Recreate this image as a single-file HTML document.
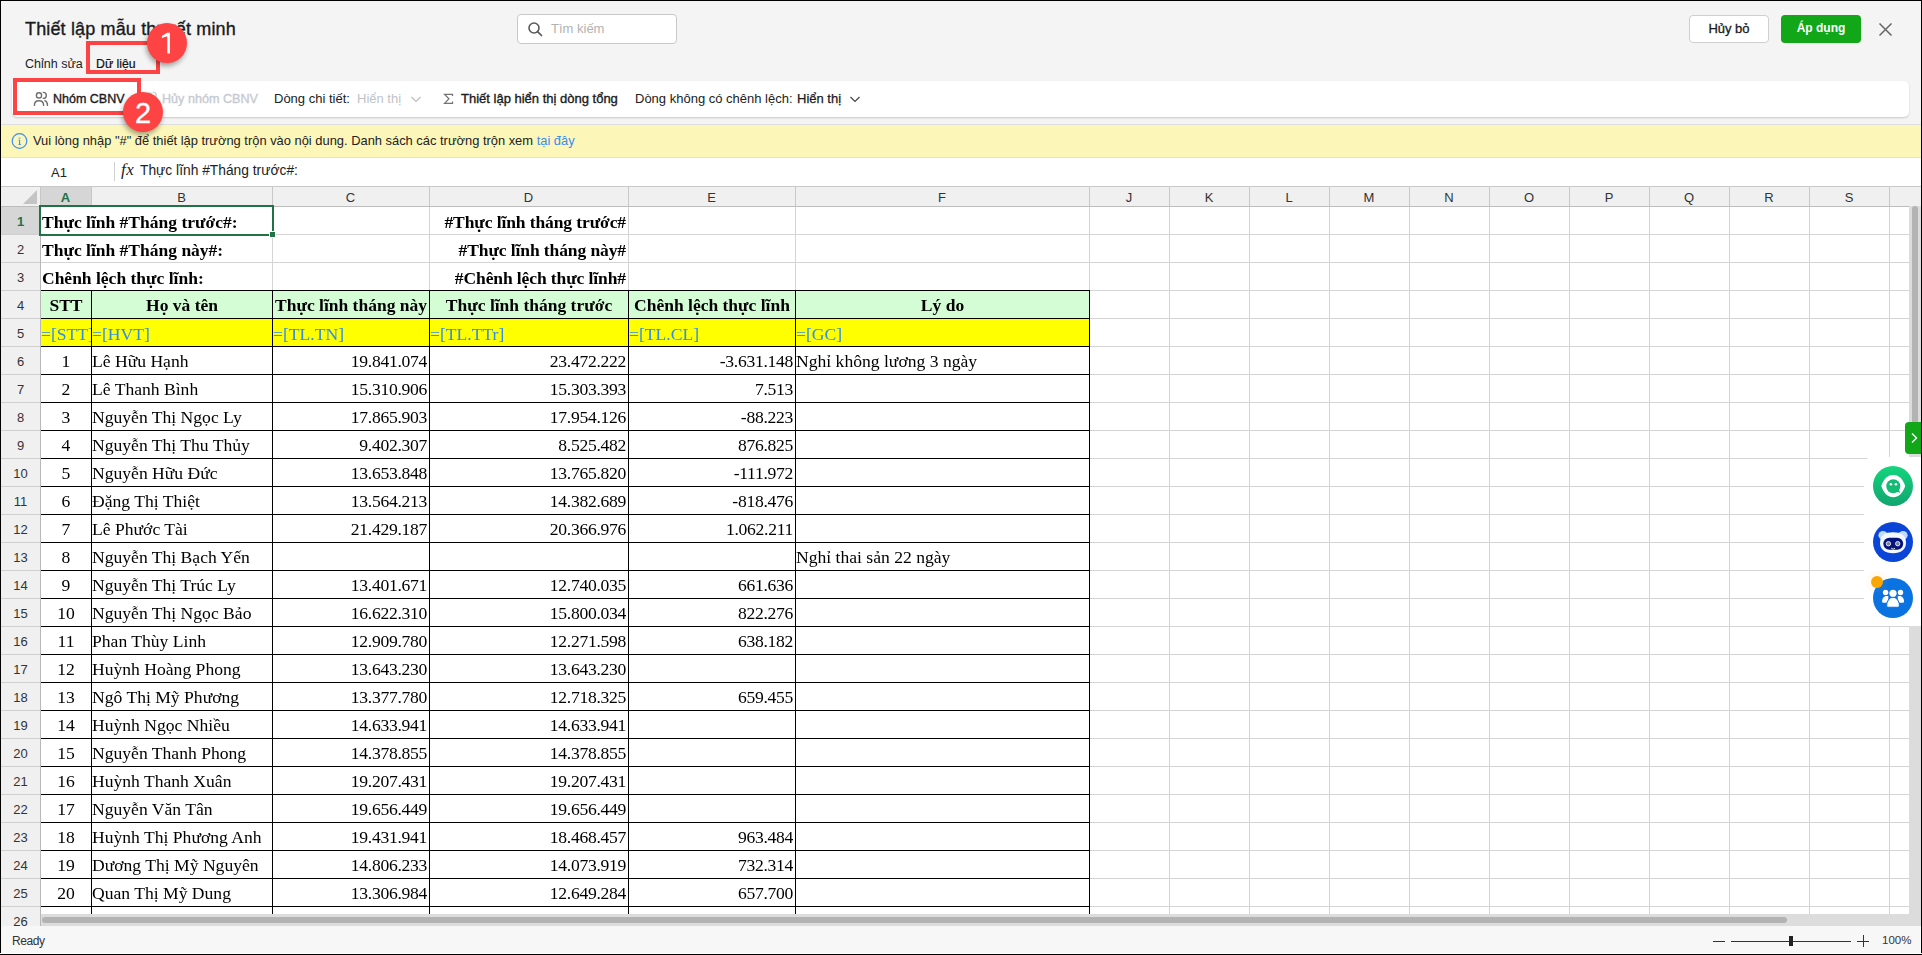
<!DOCTYPE html><html><head><meta charset="utf-8"><style>
*{margin:0;padding:0;box-sizing:border-box}
html,body{width:1922px;height:955px;overflow:hidden;background:#fff}
body{position:relative;font-family:"Liberation Sans",sans-serif;color:#222}
.a{position:absolute}
.t{position:absolute;white-space:nowrap;line-height:1}
.serif{font-family:"Liberation Serif",serif}
.gl{position:absolute;background:#d4d4d4}
.bk{position:absolute;background:#000}
.ch{position:absolute;top:187px;height:19px;font-size:13px;color:#333;text-align:center;line-height:22px}
.rh{position:absolute;left:1px;width:39px;height:28px;font-size:13px;color:#333;text-align:center;line-height:32px}
.c{will-change:transform;position:absolute;height:28px;font-family:"Liberation Serif",serif;font-size:17.6px;line-height:28px;white-space:nowrap;overflow:hidden;color:#000}
.b{font-weight:bold;font-size:17.5px}
.r{text-align:right;padding-right:2px;letter-spacing:-0.3px}
.ct{text-align:center}
.l{padding-left:0px}
.blue{color:#2f8cf0;line-height:30px;will-change:transform}
</style></head><body>
<div class="a" style="left:0;top:0;width:1922px;height:125px;background:#f4f4f4"></div>
<div class="t" style="left:25px;top:20px;font-size:18px;letter-spacing:0.15px;color:#1a1a1a;-webkit-text-stroke:0.35px #1a1a1a">Thiết lập mẫu thuyết minh</div>
<div class="a" style="left:517px;top:14px;width:160px;height:30px;background:#fff;border:1px solid #c9c9c9;border-radius:4px"></div>
<svg class="a" style="left:527px;top:21px" width="18" height="18" viewBox="0 0 18 18"><circle cx="7" cy="7" r="5" fill="none" stroke="#5a5a5a" stroke-width="1.6"/><line x1="10.6" y1="10.6" x2="14.5" y2="14.5" stroke="#5a5a5a" stroke-width="1.7" stroke-linecap="round"/></svg>
<div class="t" style="left:551px;top:22px;font-size:13px;color:#b2b2b2">Tìm kiếm</div>
<div class="a" style="left:1689px;top:15px;width:80px;height:28px;background:#fff;border:1px solid #cfcfcf;border-radius:4px"></div>
<div class="t" style="left:1689px;top:22px;width:80px;text-align:center;font-size:13px;color:#1a1a1a;-webkit-text-stroke:0.3px #1a1a1a">Hủy bỏ</div>
<div class="a" style="left:1781px;top:15px;width:80px;height:28px;background:#12a619;border-radius:4px"></div>
<div class="t" style="left:1781px;top:22px;width:80px;text-align:center;font-size:12px;font-weight:bold;color:#fff">Áp dụng</div>
<svg class="a" style="left:1878px;top:22px" width="15" height="15" viewBox="0 0 15 15"><path d="M1.5 1.5L13.5 13.5M13.5 1.5L1.5 13.5" stroke="#666" stroke-width="1.5"/></svg>
<div class="t" style="left:25px;top:58px;font-size:12.5px;color:#222">Chỉnh sửa</div>
<div class="t" style="left:96px;top:58px;font-size:12.3px;color:#111;-webkit-text-stroke:0.2px #111">Dữ liệu</div>
<div class="a" style="left:12px;top:81px;width:1897px;height:36px;background:#fff;border-radius:5px;box-shadow:0 1px 2px rgba(0,0,0,0.18)"></div>
<svg class="a" style="left:33px;top:91px" width="16" height="16" viewBox="0 0 16 16" fill="none" stroke="#707070" stroke-width="1.4" stroke-linecap="round"><circle cx="6" cy="4.4" r="2.6"/><path d="M1.4 14.4C1.4 11.5 3.4 9.7 6 9.7S10.6 11.5 10.6 14.4"/><path d="M10.3 1.4A3 3 0 0 1 10.3 7.4"/><path d="M11.9 9.6C13.6 10.3 14.5 12 14.5 14.4"/></svg>
<div class="t" style="left:53px;top:93px;font-size:12.5px;color:#1a1a1a;-webkit-text-stroke:0.35px #1a1a1a">Nhóm CBNV</div>
<svg class="a" style="left:143px;top:91px" width="16" height="16" viewBox="0 0 16 16" fill="none" stroke="#c9cdd4" stroke-width="1.3" stroke-linecap="round"><circle cx="6" cy="4.4" r="2.6"/><path d="M1.4 14.4C1.4 11.5 3.4 9.7 6 9.7S10.6 11.5 10.6 14.4"/><path d="M10.3 1.4A3 3 0 0 1 10.3 7.4"/><path d="M11.9 9.6C13.6 10.3 14.5 12 14.5 14.4"/></svg>
<div class="t" style="left:162px;top:93px;font-size:12.6px;color:#c6cad1;-webkit-text-stroke:0.35px #c6cad1">Hủy nhóm CBNV</div>
<div class="t" style="left:274px;top:92px;font-size:13px;color:#222">Dòng chi tiết:</div>
<div class="t" style="left:357px;top:92px;font-size:13px;color:#bfc3ca">Hiển thị</div>
<svg class="a" style="left:410px;top:94px" width="12" height="10" viewBox="0 0 12 10"><path d="M1.5 3l4.5 4.5L10.5 3" fill="none" stroke="#b9bdc4" stroke-width="1.2"/></svg>
<svg class="a" style="left:442px;top:92px" width="14" height="14" viewBox="0 0 14 14"><path d="M10.5 4.1V2.4H2.6L6.9 6.85 2.6 11.3H10.5V9.6" fill="none" stroke="#737373" stroke-width="1.25" stroke-linejoin="miter"/></svg>
<div class="t" style="left:461px;top:92px;font-size:13px;color:#1a1a1a;-webkit-text-stroke:0.35px #1a1a1a">Thiết lập hiển thị dòng tổng</div>
<div class="t" style="left:635px;top:92px;font-size:13px;color:#222">Dòng không có chênh lệch:</div>
<div class="t" style="left:797px;top:92px;font-size:13px;color:#1a1a1a;-webkit-text-stroke:0.25px #1a1a1a">Hiển thị</div>
<svg class="a" style="left:849px;top:94px" width="12" height="10" viewBox="0 0 12 10"><path d="M1.5 3l4.5 4.5L10.5 3" fill="none" stroke="#444" stroke-width="1.2"/></svg>
<div class="a" style="left:0;top:124px;width:1922px;height:1px;background:#dedede"></div>
<div class="a" style="left:0;top:125px;width:1922px;height:32px;background:#fcf6b8"></div>
<div class="a" style="left:0;top:157px;width:1922px;height:1px;background:#e2e2e2"></div>
<svg class="a" style="left:10.5px;top:133px" width="17" height="17" viewBox="0 0 17 17"><circle cx="8.5" cy="8" r="7.3" fill="none" stroke="#3d8ef0" stroke-width="1.2"/><rect x="7.6" y="4.7" width="1.8" height="0.9" fill="#3d8ef0"/><path d="M7.6 6.7H9.1V11.1H9.8V11.9H7.6V11.1H8V7.5H7.6Z" fill="#3d8ef0"/></svg>
<div class="t" style="left:33px;top:135px;font-size:12.9px;color:#222">Vui lòng nhập "#" để thiết lập trường trộn vào nội dung. Danh sách các trường trộn xem <span style="color:#3b8cf0">tại đây</span></div>
<div class="t" style="left:51px;top:166px;font-size:13px;color:#222">A1</div>
<div class="a" style="left:114px;top:162px;width:1px;height:19px;background:#d0d0d0"></div>
<div class="t serif" style="left:121px;top:161px;font-size:17px;font-style:italic;color:#222;letter-spacing:0.5px">fx</div>
<div class="t" style="left:140px;top:164px;font-size:13.8px;color:#222">Thực lĩnh #Tháng trước#:</div>
<div class="a" style="left:1px;top:186px;width:1920px;height:1px;background:#c8c8c8"></div>
<div class="a" style="left:1px;top:187px;width:1920px;height:19px;background:#f0f0f0"></div>
<div class="a" style="left:1px;top:206px;width:39px;height:720px;background:#f0f0f0"></div>
<div class="a" style="left:41px;top:187px;width:50px;height:19px;background:#d6d6d6"></div>
<div class="a" style="left:1px;top:207px;width:39px;height:27px;background:#d6d6d6"></div>
<svg class="a" style="left:22px;top:189px" width="16" height="16" viewBox="0 0 16 16"><path d="M15 1V15H1Z" fill="#c4c4c4"/></svg>
<div class="a" style="left:40px;top:187px;width:1px;height:19px;background:#c8c8c8"></div>
<div class="ch" style="left:40px;width:51px;color:#217346;font-weight:bold;">A</div>
<div class="a" style="left:91px;top:187px;width:1px;height:19px;background:#c8c8c8"></div>
<div class="ch" style="left:91px;width:181px;color:#333;">B</div>
<div class="a" style="left:272px;top:187px;width:1px;height:19px;background:#c8c8c8"></div>
<div class="ch" style="left:272px;width:157px;color:#333;">C</div>
<div class="a" style="left:429px;top:187px;width:1px;height:19px;background:#c8c8c8"></div>
<div class="ch" style="left:429px;width:199px;color:#333;">D</div>
<div class="a" style="left:628px;top:187px;width:1px;height:19px;background:#c8c8c8"></div>
<div class="ch" style="left:628px;width:167px;color:#333;">E</div>
<div class="a" style="left:795px;top:187px;width:1px;height:19px;background:#c8c8c8"></div>
<div class="ch" style="left:795px;width:294px;color:#333;">F</div>
<div class="a" style="left:1089px;top:187px;width:1px;height:19px;background:#c8c8c8"></div>
<div class="ch" style="left:1089px;width:80px;color:#333;">J</div>
<div class="a" style="left:1169px;top:187px;width:1px;height:19px;background:#c8c8c8"></div>
<div class="ch" style="left:1169px;width:80px;color:#333;">K</div>
<div class="a" style="left:1249px;top:187px;width:1px;height:19px;background:#c8c8c8"></div>
<div class="ch" style="left:1249px;width:80px;color:#333;">L</div>
<div class="a" style="left:1329px;top:187px;width:1px;height:19px;background:#c8c8c8"></div>
<div class="ch" style="left:1329px;width:80px;color:#333;">M</div>
<div class="a" style="left:1409px;top:187px;width:1px;height:19px;background:#c8c8c8"></div>
<div class="ch" style="left:1409px;width:80px;color:#333;">N</div>
<div class="a" style="left:1489px;top:187px;width:1px;height:19px;background:#c8c8c8"></div>
<div class="ch" style="left:1489px;width:80px;color:#333;">O</div>
<div class="a" style="left:1569px;top:187px;width:1px;height:19px;background:#c8c8c8"></div>
<div class="ch" style="left:1569px;width:80px;color:#333;">P</div>
<div class="a" style="left:1649px;top:187px;width:1px;height:19px;background:#c8c8c8"></div>
<div class="ch" style="left:1649px;width:80px;color:#333;">Q</div>
<div class="a" style="left:1729px;top:187px;width:1px;height:19px;background:#c8c8c8"></div>
<div class="ch" style="left:1729px;width:80px;color:#333;">R</div>
<div class="a" style="left:1809px;top:187px;width:1px;height:19px;background:#c8c8c8"></div>
<div class="ch" style="left:1809px;width:80px;color:#333;">S</div>
<div class="a" style="left:1889px;top:187px;width:1px;height:19px;background:#c8c8c8"></div>
<div class="a" style="left:1px;top:206px;width:1920px;height:1px;background:#bdbdbd"></div>
<div class="a" style="left:40px;top:206px;width:1px;height:720px;background:#b8b8b8"></div>
<div class="rh" style="top:206px;color:#217346;font-weight:bold;">1</div>
<div class="a" style="left:1px;top:234px;width:39px;height:1px;background:#cfcfcf"></div>
<div class="rh" style="top:234px;color:#333;">2</div>
<div class="a" style="left:1px;top:262px;width:39px;height:1px;background:#cfcfcf"></div>
<div class="rh" style="top:262px;color:#333;">3</div>
<div class="a" style="left:1px;top:290px;width:39px;height:1px;background:#cfcfcf"></div>
<div class="rh" style="top:290px;color:#333;">4</div>
<div class="a" style="left:1px;top:318px;width:39px;height:1px;background:#cfcfcf"></div>
<div class="rh" style="top:318px;color:#333;">5</div>
<div class="a" style="left:1px;top:346px;width:39px;height:1px;background:#cfcfcf"></div>
<div class="rh" style="top:346px;color:#333;">6</div>
<div class="a" style="left:1px;top:374px;width:39px;height:1px;background:#cfcfcf"></div>
<div class="rh" style="top:374px;color:#333;">7</div>
<div class="a" style="left:1px;top:402px;width:39px;height:1px;background:#cfcfcf"></div>
<div class="rh" style="top:402px;color:#333;">8</div>
<div class="a" style="left:1px;top:430px;width:39px;height:1px;background:#cfcfcf"></div>
<div class="rh" style="top:430px;color:#333;">9</div>
<div class="a" style="left:1px;top:458px;width:39px;height:1px;background:#cfcfcf"></div>
<div class="rh" style="top:458px;color:#333;">10</div>
<div class="a" style="left:1px;top:486px;width:39px;height:1px;background:#cfcfcf"></div>
<div class="rh" style="top:486px;color:#333;">11</div>
<div class="a" style="left:1px;top:514px;width:39px;height:1px;background:#cfcfcf"></div>
<div class="rh" style="top:514px;color:#333;">12</div>
<div class="a" style="left:1px;top:542px;width:39px;height:1px;background:#cfcfcf"></div>
<div class="rh" style="top:542px;color:#333;">13</div>
<div class="a" style="left:1px;top:570px;width:39px;height:1px;background:#cfcfcf"></div>
<div class="rh" style="top:570px;color:#333;">14</div>
<div class="a" style="left:1px;top:598px;width:39px;height:1px;background:#cfcfcf"></div>
<div class="rh" style="top:598px;color:#333;">15</div>
<div class="a" style="left:1px;top:626px;width:39px;height:1px;background:#cfcfcf"></div>
<div class="rh" style="top:626px;color:#333;">16</div>
<div class="a" style="left:1px;top:654px;width:39px;height:1px;background:#cfcfcf"></div>
<div class="rh" style="top:654px;color:#333;">17</div>
<div class="a" style="left:1px;top:682px;width:39px;height:1px;background:#cfcfcf"></div>
<div class="rh" style="top:682px;color:#333;">18</div>
<div class="a" style="left:1px;top:710px;width:39px;height:1px;background:#cfcfcf"></div>
<div class="rh" style="top:710px;color:#333;">19</div>
<div class="a" style="left:1px;top:738px;width:39px;height:1px;background:#cfcfcf"></div>
<div class="rh" style="top:738px;color:#333;">20</div>
<div class="a" style="left:1px;top:766px;width:39px;height:1px;background:#cfcfcf"></div>
<div class="rh" style="top:766px;color:#333;">21</div>
<div class="a" style="left:1px;top:794px;width:39px;height:1px;background:#cfcfcf"></div>
<div class="rh" style="top:794px;color:#333;">22</div>
<div class="a" style="left:1px;top:822px;width:39px;height:1px;background:#cfcfcf"></div>
<div class="rh" style="top:822px;color:#333;">23</div>
<div class="a" style="left:1px;top:850px;width:39px;height:1px;background:#cfcfcf"></div>
<div class="rh" style="top:850px;color:#333;">24</div>
<div class="a" style="left:1px;top:878px;width:39px;height:1px;background:#cfcfcf"></div>
<div class="rh" style="top:878px;color:#333;">25</div>
<div class="a" style="left:1px;top:906px;width:39px;height:1px;background:#cfcfcf"></div>
<div class="rh" style="top:906px;color:#333;">26</div>
<div class="a" style="left:1px;top:934px;width:39px;height:1px;background:#cfcfcf"></div>
<div class="gl" style="left:41px;top:234px;width:1868px;height:1px"></div>
<div class="gl" style="left:41px;top:262px;width:1868px;height:1px"></div>
<div class="gl" style="left:41px;top:290px;width:1868px;height:1px"></div>
<div class="gl" style="left:41px;top:318px;width:1868px;height:1px"></div>
<div class="gl" style="left:41px;top:346px;width:1868px;height:1px"></div>
<div class="gl" style="left:41px;top:374px;width:1868px;height:1px"></div>
<div class="gl" style="left:41px;top:402px;width:1868px;height:1px"></div>
<div class="gl" style="left:41px;top:430px;width:1868px;height:1px"></div>
<div class="gl" style="left:41px;top:458px;width:1868px;height:1px"></div>
<div class="gl" style="left:41px;top:486px;width:1868px;height:1px"></div>
<div class="gl" style="left:41px;top:514px;width:1868px;height:1px"></div>
<div class="gl" style="left:41px;top:542px;width:1868px;height:1px"></div>
<div class="gl" style="left:41px;top:570px;width:1868px;height:1px"></div>
<div class="gl" style="left:41px;top:598px;width:1868px;height:1px"></div>
<div class="gl" style="left:41px;top:626px;width:1868px;height:1px"></div>
<div class="gl" style="left:41px;top:654px;width:1868px;height:1px"></div>
<div class="gl" style="left:41px;top:682px;width:1868px;height:1px"></div>
<div class="gl" style="left:41px;top:710px;width:1868px;height:1px"></div>
<div class="gl" style="left:41px;top:738px;width:1868px;height:1px"></div>
<div class="gl" style="left:41px;top:766px;width:1868px;height:1px"></div>
<div class="gl" style="left:41px;top:794px;width:1868px;height:1px"></div>
<div class="gl" style="left:41px;top:822px;width:1868px;height:1px"></div>
<div class="gl" style="left:41px;top:850px;width:1868px;height:1px"></div>
<div class="gl" style="left:41px;top:878px;width:1868px;height:1px"></div>
<div class="gl" style="left:41px;top:906px;width:1868px;height:1px"></div>
<div class="gl" style="left:91px;top:207px;width:1px;height:707px"></div>
<div class="gl" style="left:272px;top:207px;width:1px;height:707px"></div>
<div class="gl" style="left:429px;top:207px;width:1px;height:707px"></div>
<div class="gl" style="left:628px;top:207px;width:1px;height:707px"></div>
<div class="gl" style="left:795px;top:207px;width:1px;height:707px"></div>
<div class="gl" style="left:1089px;top:207px;width:1px;height:707px"></div>
<div class="gl" style="left:1169px;top:207px;width:1px;height:707px"></div>
<div class="gl" style="left:1249px;top:207px;width:1px;height:707px"></div>
<div class="gl" style="left:1329px;top:207px;width:1px;height:707px"></div>
<div class="gl" style="left:1409px;top:207px;width:1px;height:707px"></div>
<div class="gl" style="left:1489px;top:207px;width:1px;height:707px"></div>
<div class="gl" style="left:1569px;top:207px;width:1px;height:707px"></div>
<div class="gl" style="left:1649px;top:207px;width:1px;height:707px"></div>
<div class="gl" style="left:1729px;top:207px;width:1px;height:707px"></div>
<div class="gl" style="left:1809px;top:207px;width:1px;height:707px"></div>
<div class="gl" style="left:1889px;top:207px;width:1px;height:707px"></div>
<div class="a" style="left:91px;top:207px;width:1px;height:83px;background:#fff"></div>
<div class="a" style="left:91px;top:234px;width:1px;height:1px;background:#d4d4d4"></div>
<div class="a" style="left:91px;top:262px;width:1px;height:1px;background:#d4d4d4"></div>
<div class="a" style="left:41px;top:290px;width:1048px;height:28px;background:#d4fdd6"></div>
<div class="a" style="left:41px;top:318px;width:1048px;height:28px;background:#ffff00"></div>
<div class="bk" style="left:91px;top:290px;width:1px;height:624px"></div>
<div class="bk" style="left:272px;top:290px;width:1px;height:624px"></div>
<div class="bk" style="left:429px;top:290px;width:1px;height:624px"></div>
<div class="bk" style="left:628px;top:290px;width:1px;height:624px"></div>
<div class="bk" style="left:795px;top:290px;width:1px;height:624px"></div>
<div class="bk" style="left:1089px;top:290px;width:1px;height:624px"></div>
<div class="bk" style="left:41px;top:290px;width:1049px;height:1px"></div>
<div class="bk" style="left:41px;top:318px;width:1049px;height:1px"></div>
<div class="bk" style="left:41px;top:346px;width:1049px;height:1px"></div>
<div class="bk" style="left:41px;top:374px;width:1049px;height:1px"></div>
<div class="bk" style="left:41px;top:402px;width:1049px;height:1px"></div>
<div class="bk" style="left:41px;top:430px;width:1049px;height:1px"></div>
<div class="bk" style="left:41px;top:458px;width:1049px;height:1px"></div>
<div class="bk" style="left:41px;top:486px;width:1049px;height:1px"></div>
<div class="bk" style="left:41px;top:514px;width:1049px;height:1px"></div>
<div class="bk" style="left:41px;top:542px;width:1049px;height:1px"></div>
<div class="bk" style="left:41px;top:570px;width:1049px;height:1px"></div>
<div class="bk" style="left:41px;top:598px;width:1049px;height:1px"></div>
<div class="bk" style="left:41px;top:626px;width:1049px;height:1px"></div>
<div class="bk" style="left:41px;top:654px;width:1049px;height:1px"></div>
<div class="bk" style="left:41px;top:682px;width:1049px;height:1px"></div>
<div class="bk" style="left:41px;top:710px;width:1049px;height:1px"></div>
<div class="bk" style="left:41px;top:738px;width:1049px;height:1px"></div>
<div class="bk" style="left:41px;top:766px;width:1049px;height:1px"></div>
<div class="bk" style="left:41px;top:794px;width:1049px;height:1px"></div>
<div class="bk" style="left:41px;top:822px;width:1049px;height:1px"></div>
<div class="bk" style="left:41px;top:850px;width:1049px;height:1px"></div>
<div class="bk" style="left:41px;top:878px;width:1049px;height:1px"></div>
<div class="bk" style="left:41px;top:906px;width:1049px;height:1px"></div>
<div class="c b l" style="left:42px;top:206px;width:230px;line-height:32px">Thực lĩnh #Tháng trước#:</div>
<div class="c b l" style="left:42px;top:234px;width:230px;line-height:32px">Thực lĩnh #Tháng này#:</div>
<div class="c b l" style="left:42px;top:262px;width:230px;line-height:32px">Chênh lệch thực lĩnh:</div>
<div class="c b r" style="left:430px;top:206px;width:198px;line-height:32px;letter-spacing:-0.1px">#Thực lĩnh tháng trước#</div>
<div class="c b r" style="left:430px;top:234px;width:198px;line-height:32px;letter-spacing:-0.1px">#Thực lĩnh tháng này#</div>
<div class="c b r" style="left:430px;top:262px;width:198px;line-height:32px;letter-spacing:-0.1px">#Chênh lệch thực lĩnh#</div>
<div class="c b ct" style="left:41px;top:291px;width:50px;height:27px">STT</div>
<div class="c blue" style="left:41px;top:319px;width:50px;height:27px">=[STT]</div>
<div class="c b ct" style="left:92px;top:291px;width:180px;height:27px">Họ và tên</div>
<div class="c blue" style="left:92px;top:319px;width:180px;height:27px">=[HVT]</div>
<div class="c b ct" style="left:273px;top:291px;width:156px;height:27px">Thực lĩnh tháng này</div>
<div class="c blue" style="left:273px;top:319px;width:156px;height:27px">=[TL.TN]</div>
<div class="c b ct" style="left:430px;top:291px;width:198px;height:27px">Thực lĩnh tháng trước</div>
<div class="c blue" style="left:430px;top:319px;width:198px;height:27px">=[TL.TTr]</div>
<div class="c b ct" style="left:629px;top:291px;width:166px;height:27px">Chênh lệch thực lĩnh</div>
<div class="c blue" style="left:629px;top:319px;width:166px;height:27px">=[TL.CL]</div>
<div class="c b ct" style="left:796px;top:291px;width:293px;height:27px">Lý do</div>
<div class="c blue" style="left:796px;top:319px;width:293px;height:27px">=[GC]</div>
<div class="c ct" style="left:41px;top:347px;width:50px;height:27px">1</div>
<div class="c l" style="left:92px;top:347px;width:180px;height:27px">Lê Hữu Hạnh</div>
<div class="c r" style="left:273px;top:347px;width:156px;height:27px">19.841.074</div>
<div class="c r" style="left:430px;top:347px;width:198px;height:27px">23.472.222</div>
<div class="c r" style="left:629px;top:347px;width:166px;height:27px">-3.631.148</div>
<div class="c l" style="left:796px;top:347px;width:293px;height:27px">Nghỉ không lương 3 ngày</div>
<div class="c ct" style="left:41px;top:375px;width:50px;height:27px">2</div>
<div class="c l" style="left:92px;top:375px;width:180px;height:27px">Lê Thanh Bình</div>
<div class="c r" style="left:273px;top:375px;width:156px;height:27px">15.310.906</div>
<div class="c r" style="left:430px;top:375px;width:198px;height:27px">15.303.393</div>
<div class="c r" style="left:629px;top:375px;width:166px;height:27px">7.513</div>
<div class="c ct" style="left:41px;top:403px;width:50px;height:27px">3</div>
<div class="c l" style="left:92px;top:403px;width:180px;height:27px">Nguyễn Thị Ngọc Ly</div>
<div class="c r" style="left:273px;top:403px;width:156px;height:27px">17.865.903</div>
<div class="c r" style="left:430px;top:403px;width:198px;height:27px">17.954.126</div>
<div class="c r" style="left:629px;top:403px;width:166px;height:27px">-88.223</div>
<div class="c ct" style="left:41px;top:431px;width:50px;height:27px">4</div>
<div class="c l" style="left:92px;top:431px;width:180px;height:27px">Nguyễn Thị Thu Thủy</div>
<div class="c r" style="left:273px;top:431px;width:156px;height:27px">9.402.307</div>
<div class="c r" style="left:430px;top:431px;width:198px;height:27px">8.525.482</div>
<div class="c r" style="left:629px;top:431px;width:166px;height:27px">876.825</div>
<div class="c ct" style="left:41px;top:459px;width:50px;height:27px">5</div>
<div class="c l" style="left:92px;top:459px;width:180px;height:27px">Nguyễn Hữu Đức</div>
<div class="c r" style="left:273px;top:459px;width:156px;height:27px">13.653.848</div>
<div class="c r" style="left:430px;top:459px;width:198px;height:27px">13.765.820</div>
<div class="c r" style="left:629px;top:459px;width:166px;height:27px">-111.972</div>
<div class="c ct" style="left:41px;top:487px;width:50px;height:27px">6</div>
<div class="c l" style="left:92px;top:487px;width:180px;height:27px">Đặng Thị Thiệt</div>
<div class="c r" style="left:273px;top:487px;width:156px;height:27px">13.564.213</div>
<div class="c r" style="left:430px;top:487px;width:198px;height:27px">14.382.689</div>
<div class="c r" style="left:629px;top:487px;width:166px;height:27px">-818.476</div>
<div class="c ct" style="left:41px;top:515px;width:50px;height:27px">7</div>
<div class="c l" style="left:92px;top:515px;width:180px;height:27px">Lê Phước Tài</div>
<div class="c r" style="left:273px;top:515px;width:156px;height:27px">21.429.187</div>
<div class="c r" style="left:430px;top:515px;width:198px;height:27px">20.366.976</div>
<div class="c r" style="left:629px;top:515px;width:166px;height:27px">1.062.211</div>
<div class="c ct" style="left:41px;top:543px;width:50px;height:27px">8</div>
<div class="c l" style="left:92px;top:543px;width:180px;height:27px">Nguyễn Thị Bạch Yến</div>
<div class="c l" style="left:796px;top:543px;width:293px;height:27px">Nghỉ thai sản 22 ngày</div>
<div class="c ct" style="left:41px;top:571px;width:50px;height:27px">9</div>
<div class="c l" style="left:92px;top:571px;width:180px;height:27px">Nguyễn Thị Trúc Ly</div>
<div class="c r" style="left:273px;top:571px;width:156px;height:27px">13.401.671</div>
<div class="c r" style="left:430px;top:571px;width:198px;height:27px">12.740.035</div>
<div class="c r" style="left:629px;top:571px;width:166px;height:27px">661.636</div>
<div class="c ct" style="left:41px;top:599px;width:50px;height:27px">10</div>
<div class="c l" style="left:92px;top:599px;width:180px;height:27px">Nguyễn Thị Ngọc Bảo</div>
<div class="c r" style="left:273px;top:599px;width:156px;height:27px">16.622.310</div>
<div class="c r" style="left:430px;top:599px;width:198px;height:27px">15.800.034</div>
<div class="c r" style="left:629px;top:599px;width:166px;height:27px">822.276</div>
<div class="c ct" style="left:41px;top:627px;width:50px;height:27px">11</div>
<div class="c l" style="left:92px;top:627px;width:180px;height:27px">Phan Thùy Linh</div>
<div class="c r" style="left:273px;top:627px;width:156px;height:27px">12.909.780</div>
<div class="c r" style="left:430px;top:627px;width:198px;height:27px">12.271.598</div>
<div class="c r" style="left:629px;top:627px;width:166px;height:27px">638.182</div>
<div class="c ct" style="left:41px;top:655px;width:50px;height:27px">12</div>
<div class="c l" style="left:92px;top:655px;width:180px;height:27px">Huỳnh Hoàng Phong</div>
<div class="c r" style="left:273px;top:655px;width:156px;height:27px">13.643.230</div>
<div class="c r" style="left:430px;top:655px;width:198px;height:27px">13.643.230</div>
<div class="c ct" style="left:41px;top:683px;width:50px;height:27px">13</div>
<div class="c l" style="left:92px;top:683px;width:180px;height:27px">Ngô Thị Mỹ Phương</div>
<div class="c r" style="left:273px;top:683px;width:156px;height:27px">13.377.780</div>
<div class="c r" style="left:430px;top:683px;width:198px;height:27px">12.718.325</div>
<div class="c r" style="left:629px;top:683px;width:166px;height:27px">659.455</div>
<div class="c ct" style="left:41px;top:711px;width:50px;height:27px">14</div>
<div class="c l" style="left:92px;top:711px;width:180px;height:27px">Huỳnh Ngọc Nhiều</div>
<div class="c r" style="left:273px;top:711px;width:156px;height:27px">14.633.941</div>
<div class="c r" style="left:430px;top:711px;width:198px;height:27px">14.633.941</div>
<div class="c ct" style="left:41px;top:739px;width:50px;height:27px">15</div>
<div class="c l" style="left:92px;top:739px;width:180px;height:27px">Nguyễn Thanh Phong</div>
<div class="c r" style="left:273px;top:739px;width:156px;height:27px">14.378.855</div>
<div class="c r" style="left:430px;top:739px;width:198px;height:27px">14.378.855</div>
<div class="c ct" style="left:41px;top:767px;width:50px;height:27px">16</div>
<div class="c l" style="left:92px;top:767px;width:180px;height:27px">Huỳnh Thanh Xuân</div>
<div class="c r" style="left:273px;top:767px;width:156px;height:27px">19.207.431</div>
<div class="c r" style="left:430px;top:767px;width:198px;height:27px">19.207.431</div>
<div class="c ct" style="left:41px;top:795px;width:50px;height:27px">17</div>
<div class="c l" style="left:92px;top:795px;width:180px;height:27px">Nguyễn Văn Tân</div>
<div class="c r" style="left:273px;top:795px;width:156px;height:27px">19.656.449</div>
<div class="c r" style="left:430px;top:795px;width:198px;height:27px">19.656.449</div>
<div class="c ct" style="left:41px;top:823px;width:50px;height:27px">18</div>
<div class="c l" style="left:92px;top:823px;width:180px;height:27px">Huỳnh Thị Phương Anh</div>
<div class="c r" style="left:273px;top:823px;width:156px;height:27px">19.431.941</div>
<div class="c r" style="left:430px;top:823px;width:198px;height:27px">18.468.457</div>
<div class="c r" style="left:629px;top:823px;width:166px;height:27px">963.484</div>
<div class="c ct" style="left:41px;top:851px;width:50px;height:27px">19</div>
<div class="c l" style="left:92px;top:851px;width:180px;height:27px">Dương Thị Mỹ Nguyên</div>
<div class="c r" style="left:273px;top:851px;width:156px;height:27px">14.806.233</div>
<div class="c r" style="left:430px;top:851px;width:198px;height:27px">14.073.919</div>
<div class="c r" style="left:629px;top:851px;width:166px;height:27px">732.314</div>
<div class="c ct" style="left:41px;top:879px;width:50px;height:27px">20</div>
<div class="c l" style="left:92px;top:879px;width:180px;height:27px">Quan Thị Mỹ Dung</div>
<div class="c r" style="left:273px;top:879px;width:156px;height:27px">13.306.984</div>
<div class="c r" style="left:430px;top:879px;width:198px;height:27px">12.649.284</div>
<div class="c r" style="left:629px;top:879px;width:166px;height:27px">657.700</div>
<div class="a" style="left:39px;top:205px;width:235px;height:31px;border:2px solid #217346"></div>
<div class="a" style="left:269px;top:231px;width:7px;height:7px;background:#fff"></div>
<div class="a" style="left:270px;top:232px;width:5px;height:5px;background:#217346"></div>
<div class="a" style="left:1909px;top:206px;width:12px;height:720px;background:#dcdcdc"></div>
<div class="a" style="left:1912px;top:206px;width:6px;height:220px;background:#b3b3b3;border-radius:3px"></div>
<div class="a" style="left:41px;top:914px;width:1880px;height:12px;background:#dcdcdc"></div>
<div class="a" style="left:42px;top:917px;width:1745px;height:6px;background:#b3b3b3;border-radius:3px"></div>
<div class="a" style="left:0;top:926px;width:1922px;height:29px;background:#f7f7f7"></div>
<div class="t" style="left:12px;top:935px;font-size:12px;letter-spacing:-0.45px;color:#333">Ready</div>
<div class="a" style="left:1713px;top:941px;width:12px;height:1px;background:#333"></div>
<div class="a" style="left:1731px;top:941px;width:120px;height:1px;background:#333"></div>
<div class="a" style="left:1789px;top:936px;width:4px;height:10px;background:#222"></div>
<div class="a" style="left:1857px;top:941px;width:12px;height:1px;background:#333"></div>
<div class="a" style="left:1863px;top:935px;width:1px;height:12px;background:#333"></div>
<div class="t" style="left:1882px;top:935px;font-size:11.5px;color:#333">100%</div>
<div class="a" style="left:1905px;top:422px;width:16px;height:32px;background:#12a619;border-radius:4px 0 0 4px"></div>
<svg class="a" style="left:1908px;top:431px" width="12" height="14" viewBox="0 0 12 14"><path d="M4 2.5l4.5 4.5L4 11.5" fill="none" stroke="#fff" stroke-width="1.4"/></svg>
<div class="a" style="left:1864px;top:457px;width:57px;height:169px;background:#fff;border-radius:8px 0 0 8px"></div>
<svg class="a" style="left:1873px;top:466px" width="40" height="40" viewBox="0 0 40 40"><defs><linearGradient id="gg" x1="0" y1="0" x2="0" y2="1"><stop offset="0" stop-color="#14d57d"/><stop offset="1" stop-color="#11a56f"/></linearGradient></defs><circle cx="20" cy="20" r="20" fill="url(#gg)"/><path d="M8.3 20C11 12.2 15 9.1 20.2 9.1S29.5 12.2 32.2 20C29.5 27.8 25.4 31.2 20.2 31.2S11 27.8 8.3 20Z" fill="#fff"/><circle cx="20.3" cy="20.2" r="7" fill="#13bb75"/><path d="M23.5 25.5L27.4 26.9L25.8 23.6Z" fill="#13bb75"/><circle cx="17.9" cy="18.2" r="1.3" fill="#fff"/><circle cx="22.9" cy="18.2" r="1.3" fill="#fff"/></svg>
<svg class="a" style="left:1873px;top:522px" width="40" height="40" viewBox="0 0 40 40"><circle cx="20" cy="20" r="20" fill="#0a45d8"/><ellipse cx="10" cy="13.2" rx="4.6" ry="4.3" fill="#c2dafe"/><ellipse cx="30" cy="13.2" rx="4.6" ry="4.3" fill="#c2dafe"/><path d="M7 21C7 13.5 12 10.3 20 10.3S33 13.5 33 21C33 27.5 28 31.2 20 31.2S7 27.5 7 21Z" fill="#f5f9ff"/><rect x="10.3" y="15.8" width="19.9" height="11.9" rx="6" fill="#06137a"/><circle cx="15.4" cy="21.7" r="2.2" fill="#7c819c" stroke="#e8ecff" stroke-width="0.9"/><circle cx="24.7" cy="21.7" r="2.2" fill="#7c819c" stroke="#e8ecff" stroke-width="0.9"/><path d="M18.2 26.2Q20.1 28.2 22 26.2" stroke="#fff" stroke-width="0.9" fill="none"/></svg>
<svg class="a" style="left:1873px;top:578px" width="40" height="40" viewBox="0 0 40 40"><circle cx="20" cy="20" r="20" fill="#0b72e2"/><circle cx="20" cy="15.3" r="3.6" fill="#fff"/><circle cx="12.6" cy="14.5" r="2.7" fill="#fff"/><circle cx="27.5" cy="14.5" r="2.7" fill="#fff"/><path d="M9.1 23.4C9.1 20.2 11 18 13.8 18H15.3V24.8H10.5C9.7 24.8 9.1 24.2 9.1 23.4Z" fill="#fff"/><path d="M31 23.4C31 20.2 29.1 18 26.3 18H24.8V24.8H29.6C30.4 24.8 31 24.2 31 23.4Z" fill="#fff"/><path d="M13.6 28.2C13.6 22.8 16.4 19.3 20 19.3S26.5 22.8 26.5 28.2V27.8C26.5 28.7 25.8 29.2 25 29.2H15C14.2 29.2 13.6 28.7 13.6 27.8Z" fill="#fff" stroke="#0b72e2" stroke-width="1.1"/></svg>
<div class="a" style="left:1866px;top:571px;width:22px;height:22px;border-radius:50%;background:rgba(249,166,2,0.045)"></div>
<div class="a" style="left:1871px;top:576px;width:12px;height:12px;border-radius:50%;background:#f9a602"></div>
<div class="a" style="left:86px;top:41px;width:74px;height:33px;border:4px solid #fd4343"></div>
<div class="a" style="left:13px;top:78px;width:128px;height:37px;border:4px solid #fd4343"></div>
<div class="a" style="left:147px;top:23px;width:40px;height:40px;border-radius:50%;background:#fd4343;box-shadow:-1px 3px 5px rgba(0,0,0,0.35)"></div>
<svg class="a" style="left:147px;top:23px" width="40" height="40" viewBox="0 0 40 40"><path d="M20.4 9.8H22.9V30.4H20.3V13.2L14.9 15.1V12.9L20.1 9.8Z" fill="#fff"/></svg>
<div class="a" style="left:123px;top:92px;width:40px;height:40px;border-radius:50%;background:#fd4343;box-shadow:-1px 3px 5px rgba(0,0,0,0.35)"></div>
<div class="t" style="left:123px;top:99px;width:40px;text-align:center;font-size:29px;color:#fff;-webkit-text-stroke:0.3px #fff">2</div>
<div class="a" style="left:0;top:0;width:1922px;height:1px;background:#000"></div>
<div class="a" style="left:0;top:0;width:1px;height:955px;background:#000"></div>
<div class="a" style="left:1921px;top:0;width:1px;height:955px;background:#000"></div>
<div class="a" style="left:0;top:953px;width:1922px;height:1px;background:#fff"></div>
<div class="a" style="left:0;top:954px;width:1922px;height:1px;background:#000"></div>
<div class="a" style="left:1920px;top:926px;width:1px;height:28px;background:#fff"></div>
</body></html>
